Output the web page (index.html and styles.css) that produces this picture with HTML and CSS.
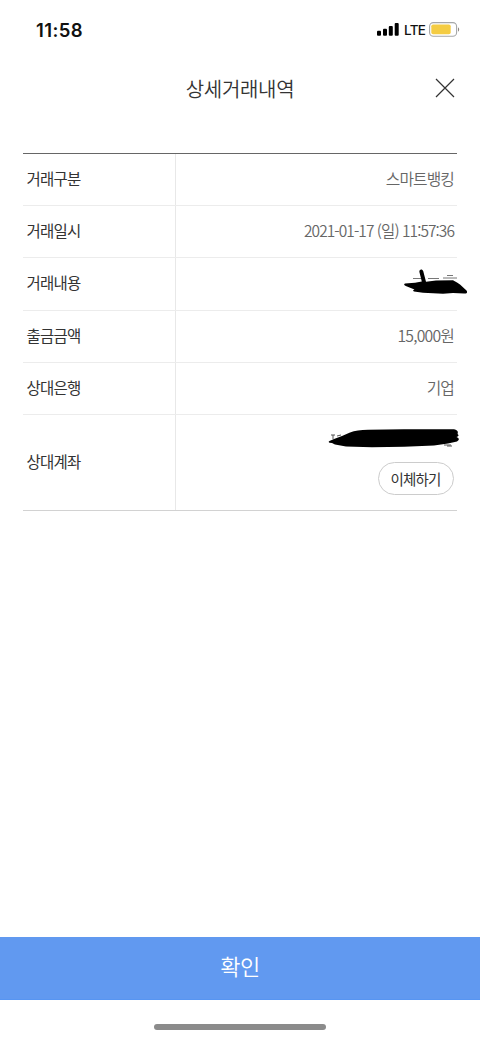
FILE: index.html
```html
<!DOCTYPE html>
<html lang="ko">
<head>
<meta charset="utf-8">
<title>상세거래내역</title>
<link rel="stylesheet" href="styles.css">
</head>
<body>
<div class="screen">
  <div class="status">
    <span class="time">11:58</span>
    <div class="indicators">
      <svg class="signal" width="22" height="14" viewBox="0 0 22 14"><rect x="0" y="8.7" width="4" height="5" rx="1"/><rect x="6" y="6.8" width="4" height="6.9" rx="1"/><rect x="11.8" y="4" width="4" height="9.7" rx="1"/><rect x="17.7" y="1" width="4" height="12.7" rx="1"/></svg>
      <span class="network">LTE</span>
      <svg class="battery" width="31" height="15" viewBox="0 0 31 15"><rect x=".6" y=".6" width="27" height="13.6" rx="3.8" fill="#fff" stroke="#a5a7a8" stroke-width="1.1"/><rect x="2.3" y="2.5" width="19.4" height="9.7" rx="1.8" fill="#f4cc43"/><path d="M29 5.2c1.6.7 1.6 3.8 0 4.5z" fill="#8b8580"/></svg>
    </div>
  </div>
  <header class="header">
    <h1 class="title">상세거래내역</h1>
    <button class="close" aria-label="닫기"><svg width="20" height="20" viewBox="0 0 20 20"><path d="M1 1L19 19M19 1L1 19" fill="none" stroke="#333" stroke-width="1.2"/></svg></button>
  </header>
  <dl class="details">
    <div class="row first"><dt>거래구분</dt><dd>스마트뱅킹</dd></div>
    <div class="row"><dt>거래일시</dt><dd class="date">2021-01-17 (일) 11:57:36</dd></div>
    <div class="row tall"><dt>거래내용</dt><dd>
      <svg class="scribble-name" width="66" height="30" viewBox="0 0 66 30"><path d="M10 10.5H18M25 10.5H36M40 10H54M44 7.5H50" fill="none" stroke="#777" stroke-width="1"/><path d="M2 15.5L12 14.8 18.8 13.6 16.4 4C16 1 19.4.6 20.2 3L23 13.8 33 12.6 50 12.2 54 14.5 57 16.4 63.5 22.5C65 24.3 63.5 26 61 25.5L50 25 40 25.7 20 24.7 11 23.4Q9 22.5 11.5 21.4L4 18.4Q-.5 17 2 15.5Z"/></svg>
    </dd></div>
    <div class="row"><dt>출금금액</dt><dd class="amount">15,000원</dd></div>
    <div class="row"><dt>상대은행</dt><dd>기업</dd></div>
    <div class="row account"><dt>상대계좌</dt><dd>
      <svg class="scribble-account" width="134" height="22" viewBox="0 0 134 22"><path d="M3 7H7M5 7V11M9 8L13 7M116 17H123M119 18H124" stroke="#555" fill="none"/><path d="M1.5 13L6 11 14 8 22 4.5Q29 2 40 1.8L76 1.2 126 1.2Q131 2.2 129.5 6 132 7.8 128.5 9 133 11 129 13.5L120 15.5 106 17.5 76 18.7 44 19.2 18 18.5 7 16.5 4 15Q-1 14.8 1.5 13Z"/></svg>
      <button class="transfer">이체하기</button>
    </dd></div>
  </dl>
  <button class="confirm">확인</button>
  <div class="home"></div>
</div>
</body>
</html>
```
FILE: styles.css
```css
* { box-sizing: border-box; }
body { margin: 0; background: #fff; font-family: "Noto Sans CJK KR", sans-serif; color: #333; }
button { font-family: inherit; margin: 0; padding: 0; border: 0; background: none; }
.screen { height: 1039px; display: flex; flex-direction: column; overflow: hidden; }
.status { height: 58px; padding: 0 20px 0 36px; display: flex; justify-content: space-between; align-items: center; flex: none; }
.time { font: 600 18.5px/20px Inter, sans-serif; color: #111; letter-spacing: .4px; padding-top: 1px; }
.indicators { display: flex; align-items: center; }
.signal { margin-right: 5px; }
.network { font: 500 13.5px/20px Inter, sans-serif; color: #111; width: 26px; letter-spacing: -.7px; padding-top: 1px; }
.battery { margin-left: -1px; }
.header { height: 60px; padding: 0 25px 0 45px; display: flex; align-items: center; flex: none; }
.title { flex: 1; margin: 0; padding-top: 1px; text-align: center; font-size: 20px; line-height: 28px; font-weight: 350; letter-spacing: -.3px; }
.close { width: 20px; height: 20px; display: flex; }
.details { flex: none; margin: 35px 23px 0; border-top: 1px solid #666; border-bottom: 1px solid #d2d2d2; }
.row { display: flex; height: 52px; }
.row.first { height: 51px; }
.row + .row { border-top: 1px solid #ececec; }
.row.tall { height: 53px; }
.row.account { height: 96px; }
dt { width: 153px; padding: 0 0 4px 3.5px; border-right: 1px solid #e8e8e8; display: flex; align-items: center; font-size: 15.5px; letter-spacing: -.8px; font-weight: 400; }
dd { flex: 1; margin: 0; padding: 0 3px 3px 0; display: flex; justify-content: flex-end; align-items: center; position: relative; font-size: 15.8px; letter-spacing: -.9px; font-weight: 350; color: #666; }
.row.account dt { padding-bottom: 4px; }
.date { font-size: 15.5px; letter-spacing: -.93px; }
.amount { font-size: 15.8px; letter-spacing: -.8px; }
.scribble-name { position: absolute; right: -12px; top: 10px; }
.account dd { flex-direction: column; align-items: flex-end; justify-content: flex-start; padding: 47px 3.5px 0 0; }
.scribble-account { position: absolute; right: -5px; top: 13px; }
.transfer { width: 76px; height: 33px; padding-bottom: 1px; border: 1px solid #ccc; border-radius: 17px; font-size: 14.5px; letter-spacing: -.8px; color: #333; flex: none; }
.confirm { margin-top: auto; height: 63px; flex: none; background: #6199f0; border-bottom: 1px solid #5795f2; color: #fff; font-size: 22px; font-weight: 350; padding-bottom: 6px; letter-spacing: -.5px; }
.home { flex: none; width: 172px; height: 6px; border-radius: 3px; background: #8b8b8b; margin: 24px auto 9px; }
```
